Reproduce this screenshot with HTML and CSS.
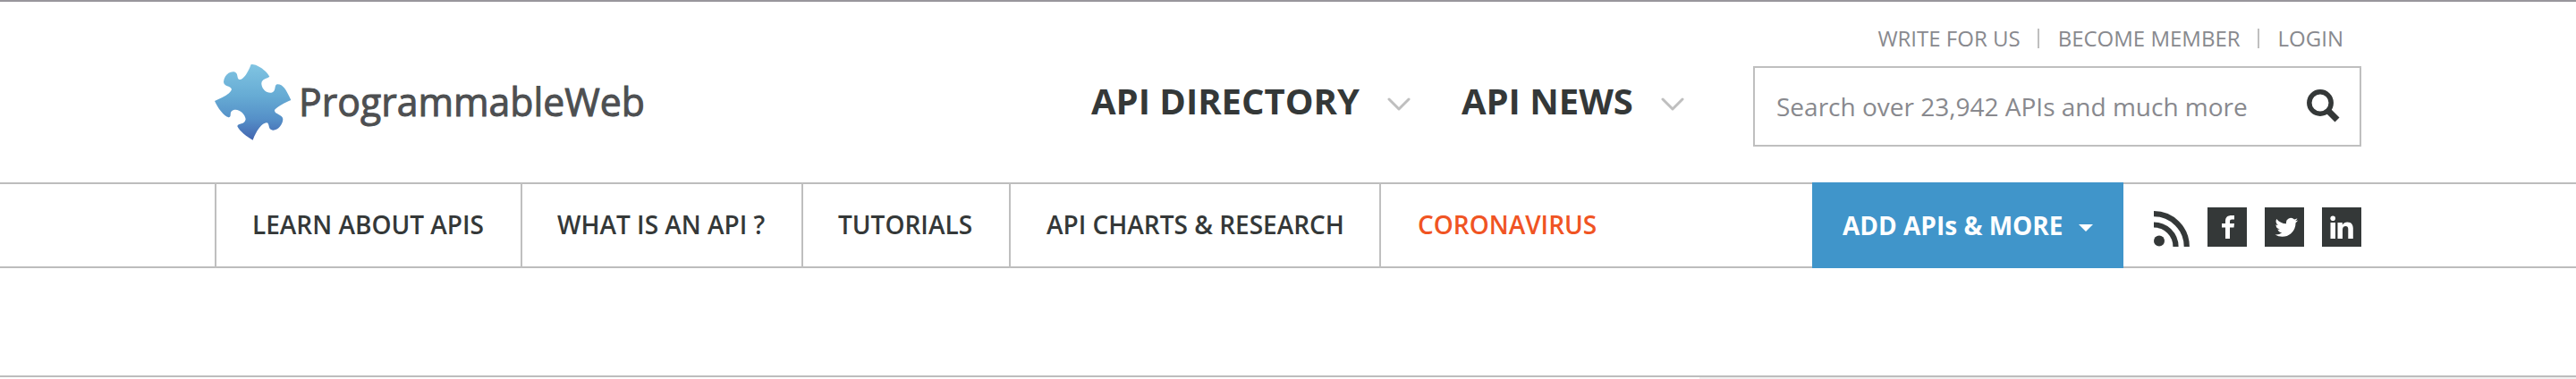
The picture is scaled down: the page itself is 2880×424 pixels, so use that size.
FILE: index.html
```html
<!DOCTYPE html>
<html lang="en">
<head>
<meta charset="utf-8">
<title>ProgrammableWeb</title>
<link rel="stylesheet" href="styles.css">
</head>
<body>
<header class="masthead">
  <div class="container masthead-row">
    <a class="logo">
      <svg class="logo-mark" viewBox="30 35 258 255" aria-hidden="true">
        <defs>
          <linearGradient id="piece" x1="0" y1="0" x2="0" y2="1">
            <stop offset="0" stop-color="#80c4e2"/>
            <stop offset=".42" stop-color="#66abd4"/>
            <stop offset=".72" stop-color="#5590c8"/>
            <stop offset="1" stop-color="#4365b0"/>
          </linearGradient>
        </defs>
        <path fill="url(#piece)" d="M152 35 C158 35 164 36 168 37 C188 46 204 58 214 76 C206 83 186 83 187 101 C189 119 204 132 220 130 C238 127 228 105 239 102 C257 100 269 117 286 155 C267 162 241 177 231 188 C229 203 257 202 259 218 C259 236 243 257 225 256 C207 254 216 234 205 231 C190 230 170 257 158 289 C139 279 113 259 106 243 C108 231 132 239 134 219 C132 199 105 178 88 191 C79 198 88 212 77 213 C60 208 41 182 30 158 C52 148 82 136 87 119 C83 105 61 112 60 93 C62 73 76 59 95 60 C111 64 103 83 112 86 C127 88 142 61 152 35Z"/>
      </svg>
      <svg class="logo-name" viewBox="0 0 390 60"><text class="logo-text" x="-2" y="40" textLength="387" lengthAdjust="spacingAndGlyphs">ProgrammableWeb</text></svg>
    </a>
    <nav class="primary">
      <a class="primary-link">API DIRECTORY</a>
      <svg class="chevron" viewBox="0 0 26 16"><path d="M2 2 13 13 24 2"/></svg>
      <a class="primary-link news">API NEWS</a>
      <svg class="chevron" viewBox="0 0 26 16"><path d="M2 2 13 13 24 2"/></svg>
    </nav>
    <div class="tools">
      <div class="account">
        <a>WRITE FOR US</a><i class="bar"></i><a>BECOME MEMBER</a><i class="bar"></i><a>LOGIN</a>
      </div>
      <div class="search">
        <span>Search over 23,942 APIs and much more</span>
        <svg class="search-icon" viewBox="0 0 38 38"><circle cx="15" cy="15" r="12.2"/><path d="M22.5 22.500 34 34"/></svg>
      </div>
    </div>
  </div>
</header>
<div class="subnav">
  <div class="container subnav-row">
    <nav class="topics">
      <a class="topic learn">LEARN ABOUT APIS</a>
      <a class="topic what">WHAT IS AN API ?</a>
      <a class="topic tutorials">TUTORIALS</a>
      <a class="topic charts">API CHARTS &amp; RESEARCH</a>
      <a class="topic hot">CORONAVIRUS</a>
    </nav>
    <a class="add"><span>ADD APIs &amp; MORE</span><i class="caret"></i></a>
    <div class="social">
      <svg class="rss" viewBox="0 0 40 40"><circle cx="6" cy="33.500" r="6"/><path class="arc" d="M0 15.500A24.500 24.500 0 0 1 24.500 40M0 3.200A36.800 36.800 0 0 1 36.800 40"/></svg>
      <svg class="tile" viewBox="0 0 44 44"><path class="tile-bg" d="M0 0H44V44H0z"/><path d="M20 35V22.500H16V18H20V15.500C20 11 22.500 9 27 9H30V13.500H27.500C25.500 13.500 25 14.300 25 16V18H30L29.500 22.500H25V35z"/></svg>
      <svg class="tile" viewBox="0 0 44 44"><path class="tile-bg" d="M0 0H44V44H0z"/><path transform="translate(11.500 9.500) scale(1.07)" d="M23.950 4.570a10 10 0 0 1-2.820.770 4.960 4.960 0 0 0 2.160-2.720c-.950.550-2 .950-3.130 1.180a4.920 4.920 0 0 0-8.380 4.480C7.690 8.090 4.070 6.130 1.640 3.160a4.820 4.820 0 0 0-.670 2.480c0 1.710.870 3.210 2.190 4.100a4.900 4.900 0 0 1-2.230-.620v.060a4.920 4.920 0 0 0 3.950 4.830 5 5 0 0 1-2.210.080 4.940 4.940 0 0 0 4.600 3.420A9.870 9.870 0 0 1 0 19.540a13.990 13.990 0 0 0 7.550 2.210c9.050 0 14-7.500 14-13.980l-.020-.640a9.940 9.940 0 0 0 2.420-2.560z"/></svg>
      <svg class="tile" viewBox="0 0 44 44"><path class="tile-bg" d="M0 0H44V44H0z"/><circle cx="12.200" cy="12.300" r="2.800"/><path d="M9.500 17H15V35H9.500zM17.500 17H22.800V19.500C24.300 17.500 26 16.500 28.400 16.500C32.800 16.500 34.800 19.300 34.800 23.500V35H29.300V24.500C29.300 22.300 28.500 21 26.500 21C24.200 21 23 22.500 23 25V35H17.500z"/></svg>
    </div>
  </div>
</div>
<main class="stage"></main>
<div class="edge"></div>
</body>
</html>
```
FILE: styles.css
```css
* { box-sizing: border-box; }
body {
  margin: 0;
  background: #fff;
  color: #343838;
  font-family: "Open Sans", "Noto Sans", sans-serif;
}
svg { display: block; flex: none; }
.container { width: 2400px; margin: 0 auto; display: flex; }
.masthead { height: 204px; border-top: 2px solid #98969c; }
.masthead-row { height: 202px; align-items: flex-start; }
.logo { display: flex; width: 980px; padding-top: 70px; }
.logo-mark { width: 86px; height: 85px; }
.logo-name { width: 390px; height: 60px; margin: 18px 0 0 10px; overflow: visible; }
.logo-text { font-size: 44px; fill: #4d4f51; stroke: #4d4f51; stroke-width: 1px; }
.primary { display: flex; align-items: center; width: 740px; padding-top: 84px; }
.primary-link { font-size: 40px; font-weight: 700; line-height: 54px; white-space: nowrap; }
.news { margin-left: 57px; }
.chevron { width: 26px; height: 16px; margin: 7px 0 0 31px; fill: none; stroke: #bfbfbf; stroke-width: 3; stroke-linecap: round; stroke-linejoin: round; }
.tools { width: 680px; }
.account { display: flex; justify-content: flex-end; align-items: center; height: 72px; padding: 10px 20px 2px 0; font-size: 24px; color: #88898e; white-space: nowrap; }
.bar { width: 2px; height: 22px; margin: 2px 21px 0 19px; background: #bfbfbf; }
.search { display: flex; justify-content: space-between; align-items: center; height: 90px; padding: 0 21px 0 24px; border: 2px solid #bfbfbf; font-size: 28px; color: #88898e; white-space: nowrap; }
.search-icon { width: 38px; height: 38px; fill: none; stroke: #343838; stroke-width: 5.500; }
.search-icon path { stroke-width: 7; }
.subnav { height: 96px; background: linear-gradient(#bdbdbd, #bdbdbd) 0 0 / 100% 2px no-repeat, linear-gradient(#bdbdbd, #bdbdbd) 0 100% / 100% 2px no-repeat; }
.subnav-row { height: 96px; }
.topics { display: flex; width: 1786px; }
.topic { height: 96px; padding-left: 40px; border-left: 2px solid #bfbfbf; font-size: 28px; font-weight: 600; line-height: 95px; white-space: nowrap; }
.learn { width: 342px; }
.what { width: 314px; padding-left: 39px; }
.tutorials { width: 232px; padding-left: 39px; }
.charts { width: 414px; }
.hot { padding-left: 41px; color: #f05423; }
.add { display: flex; align-items: center; width: 348px; height: 96px; padding: 0 0 1px 34px; background: #4095ca; color: #fff; font-size: 28px; font-weight: 700; white-space: nowrap; }
.caret { margin: 6px 0 0 17px; border: 8px solid transparent; border-top-color: #fff; border-bottom: 0; }
.social { display: flex; gap: 20px; padding: 28px 0 0 34px; }
.rss { width: 40px; height: 40px; margin-top: 4px; fill: #343838; }
.arc { fill: none; stroke: #343838; stroke-width: 6.200; }
.tile { width: 44px; height: 44px; fill: #fff; }
.tile-bg { fill: #343838; }
.stage { height: 122px; border-bottom: 2px solid #bdbdbd; }
.edge { height: 2px; margin-left: 1900px; background: #f0f0f0; }
```
